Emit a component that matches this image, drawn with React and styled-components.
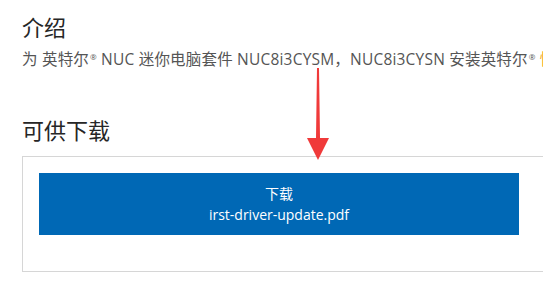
import React from 'react'
import styled, { createGlobalStyle } from 'styled-components'

const GlobalStyle = createGlobalStyle`
  html, body {
    margin: 0;
    padding: 0;
    background: #fff;
    overflow: hidden;
  }
  body {
    font-family: "Open Sans", "Noto Sans CJK SC", sans-serif;
  }
`;

const Page = styled.div`
  position: relative;
  width: 760px;
  padding: 11px 0 0 22px;
  box-sizing: border-box;
`;

const Heading = styled.h2`
  margin: 0;
  font-family: "Noto Sans CJK SC", sans-serif;
  font-size: 22px;
  font-weight: 400;
  line-height: 30px;
  color: #262626;
`;

const Intro = styled.p`
  margin: 6px 0 0;
  font-family: "Open Sans", "Noto Sans CJK SC", sans-serif;
  font-size: 15.5px;
  letter-spacing: 0.2px;
  line-height: 20px;
  color: #555;
  white-space: nowrap;
  sup {
    font-size: 8px;
    vertical-align: 5px;
    margin-left: 1px;
  }
`;

const Mark = styled.span`
  color: #f5a623;
`;

const Section = styled.section`
  margin-top: 45px;
`;

const DownloadBox = styled.div`
  margin-top: 12px;
  border: 1px solid #d6d6d6;
  height: 116px;
  padding: 16px 16px 0;
  box-sizing: border-box;
`;

const DownloadButton = styled.a`
  display: flex;
  flex-direction: column;
  align-items: center;
  justify-content: center;
  width: 480px;
  height: 62px;
  background: #0068b5;
  color: #fff;
  text-decoration: none;
  font-family: "Open Sans", "Noto Sans CJK SC", sans-serif;
  font-size: 14px;
  line-height: 21px;
`;

const Arrow = styled.svg`
  position: absolute;
  left: 306px;
  top: 66px;
`;

export default function App() {
  return (
    <Page>
      <GlobalStyle />
      <Heading>介绍</Heading>
      <Intro>
        为 英特尔<sup>®</sup> NUC 迷你电脑套件 NUC8i3CYSM，NUC8i3CYSN 安装英特尔<sup>®</sup> <Mark>快速存储技术</Mark>
      </Intro>
      <Section>
        <Heading>可供下载</Heading>
        <DownloadBox>
          <DownloadButton href="#">
            <span>下载</span>
            <span>irst-driver-update.pdf</span>
          </DownloadButton>
        </DownloadBox>
      </Section>
      <Arrow width="24" height="96" viewBox="0 0 24 96">
        <path d="M11 2 L13 2 L14 72 L23 72 L12 94 L1 72 L10 72 Z" fill="#f03a3a" />
      </Arrow>
    </Page>
  )
}
